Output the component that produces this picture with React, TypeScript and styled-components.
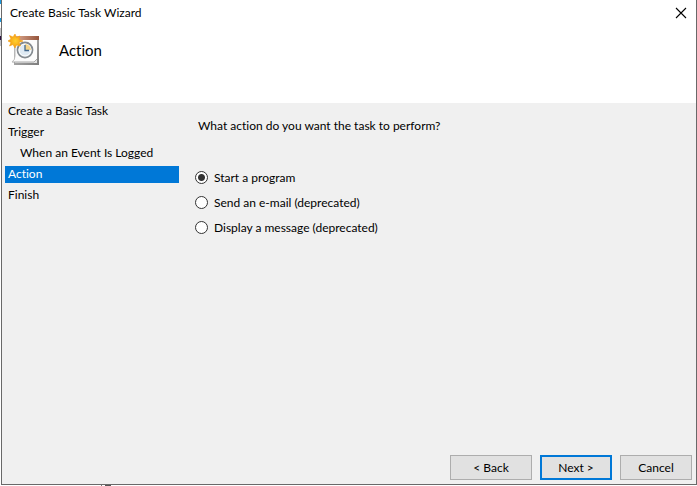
import React, { useState } from "react";
import styled, { createGlobalStyle } from "styled-components";

const Global = createGlobalStyle`
  * { box-sizing: border-box; }
  html, body, #root { height: 100%; margin: 0; }
  body {
    background: #fff;
    color: #000;
    font: 12px/16px Lato, "Open Sans", sans-serif;
    font-variant-ligatures: none;
    overflow: hidden;
  }
  button, input { font: inherit; color: inherit; margin: 0; }
`;

const Desktop = styled.div`
  min-height: 100%;
  display: flex;
  padding: 0 0 1px 1px;
  background:
    linear-gradient(#2b1040, #2b1040) 0 36px / 1px 4px no-repeat,
    linear-gradient(#c4c4c8, #c4c4c8) 0 28px / 1px 18px no-repeat,
    linear-gradient(#1a9ae0, #1a9ae0) 0 18px / 1px 4px no-repeat,
    linear-gradient(#1a9ae0, #1a9ae0) 0 0 / 1px 4px no-repeat,
    linear-gradient(#555, #555) 105px 100% / 6px 1px no-repeat,
    linear-gradient(#777, #777) 101px 100% / 1px 1px no-repeat,
    #fff;
`;

const Dialog = styled.form`
  flex: 1;
  display: flex;
  flex-direction: column;
  border: solid #696969;
  border-width: 0 1px 1px 1px;
  background: #f0f0f0;
`;

const TitleBar = styled.header`
  display: flex;
  align-items: center;
  justify-content: space-between;
  height: 25px;
  padding: 0 8px;
  background: #fff;
`;

const CloseButton = styled.button`
  display: flex;
  padding: 1px;
  border: 0;
  background: none;
`;

const Banner = styled.div`
  display: flex;
  align-items: flex-start;
  gap: 17px;
  height: 78px;
  padding: 8px 6px;
  background: #fff;
`;

const Heading = styled.h1`
  margin: 7px 0 0;
  font-size: 15px;
  line-height: 20px;
  font-weight: 400;
`;

const Body = styled.div`
  flex: 1;
  display: flex;
`;

const Steps = styled.ol`
  list-style: none;
  width: 180px;
  margin: 0;
  padding: 0 3px;
`;

const Step = styled.li<{ $nested?: boolean; $current?: boolean }>`
  height: 17px;
  margin-bottom: 4px;
  padding-left: ${(p) => (p.$nested ? 15 : 3)}px;
  color: ${(p) => (p.$current ? "#fff" : "#000")};
  background: ${(p) => (p.$current ? "#0078d7" : "transparent")};
`;

const Options = styled.fieldset`
  flex: 1;
  min-width: 0;
  margin: 0;
  padding: 15px 13px;
  border: 0;
`;

const Question = styled.legend`
  float: left;
  width: 100%;
  margin-bottom: 35px;
  padding: 0 3px;
`;

const Option = styled.label`
  clear: both;
  display: flex;
  align-items: center;
  gap: 6px;
  height: 17px;
  margin-bottom: 8px;
`;

const Radio = styled.input`
  appearance: none;
  width: 13px;
  height: 13px;
  border: 1px solid #333;
  border-radius: 50%;
  background: #fff;
  &:checked {
    background: radial-gradient(circle, #333 3px, #fff 4px);
  }
`;

const Footer = styled.footer`
  display: flex;
  justify-content: flex-end;
  gap: 8px;
  padding: 4px;
`;

const Button = styled.button<{ $primary?: boolean; $wide?: boolean }>`
  width: ${(p) => (p.$wide ? 82 : 72)}px;
  height: 25px;
  padding: 0;
  border: ${(p) => (p.$primary ? "2px solid #0078d7" : "1px solid #adadad")};
  background: #e1e1e1;
`;

const TaskIcon = () => (
  <svg width="34" height="34" viewBox="0 0 34 34" aria-hidden="true">
    <defs>
      <linearGradient id="band" x1="0" x2="1">
        <stop offset="0" stopColor="#d9a58c" />
        <stop offset="1" stopColor="#94543c" />
      </linearGradient>
      <linearGradient id="edge" x1="0" x2="1" y2="1">
        <stop offset="0" stopColor="#c8c8c8" />
        <stop offset="1" stopColor="#7c7c7c" />
      </linearGradient>
      <radialGradient id="sun">
        <stop offset="0" stopColor="#ffd030" />
        <stop offset="1" stopColor="#f39a10" />
      </radialGradient>
    </defs>
    <path d="M6 5h25v27H6z" fill="url(#edge)" />
    <path d="M7 6h22v24H7z" fill="#e4e4e4" />
    <path d="M7 6h22v20l-3 3H4q3-2 3-6z" fill="#fcfcfc" />
    <path d="M4 29h22l3-3" fill="none" stroke="#a8a8a8" />
    <path d="M7 6v17q0 4-3 6" fill="none" stroke="#bcbcbc" />
    <path d="M8 3h23v4H8z" fill="url(#band)" />
    <circle cx="17" cy="17" r="7.500" fill="#dfeaf3" stroke="#858b90" strokeWidth="1.800" />
    <circle cx="17" cy="17" r="6" fill="none" stroke="#fff" />
    <path d="M17 17v-6a6 6 0 0 1 6 6z" fill="#f3d38a" />
    <path d="M17 12v5.500h4" fill="none" stroke="#3f668c" strokeWidth="1.300" />
    <path d="M7 1l1.500 3.500L12 3l-1 3.500 4 1.500-4 1.500 1.500 3.500-4-1L7 15l-2-3.500-3.500 1.500L3 9.500 0 8l3-2L1.500 2.500 5 4z" fill="url(#sun)" stroke="#f5a011" strokeWidth=".6" />
  </svg>
);

const steps = [
  { label: "Create a Basic Task" },
  { label: "Trigger" },
  { label: "When an Event Is Logged", nested: true },
  { label: "Action", current: true },
  { label: "Finish" },
];

const actions = ["Start a program", "Send an e-mail (deprecated)", "Display a message (deprecated)"];

export default function App() {
  const [action, setAction] = useState(actions[0]);
  return (
    <>
      <Global />
      <Desktop>
        <Dialog onSubmit={(e) => e.preventDefault()}>
          <TitleBar>
            <span>Create Basic Task Wizard</span>
            <CloseButton type="button" aria-label="Close">
              <svg width="12" height="12" viewBox="0 0 12 12">
                <path d="M1 1l10 10M11 1L1 11" stroke="#000" strokeWidth="1.100" />
              </svg>
            </CloseButton>
          </TitleBar>
          <Banner>
            <TaskIcon />
            <Heading>Action</Heading>
          </Banner>
          <Body>
            <Steps>
              {steps.map((s) => (
                <Step key={s.label} $nested={s.nested} $current={s.current} aria-current={s.current ? "step" : undefined}>
                  {s.label}
                </Step>
              ))}
            </Steps>
            <Options>
              <Question>What action do you want the task to perform?</Question>
              {actions.map((a) => (
                <Option key={a}>
                  <Radio type="radio" name="action" checked={action === a} onChange={() => setAction(a)} />
                  {a}
                </Option>
              ))}
            </Options>
          </Body>
          <Footer>
            <Button type="button" $wide>&lt; Back</Button>
            <Button type="submit" $primary>Next &gt;</Button>
            <Button type="button">Cancel</Button>
          </Footer>
        </Dialog>
      </Desktop>
    </>
  );
}
